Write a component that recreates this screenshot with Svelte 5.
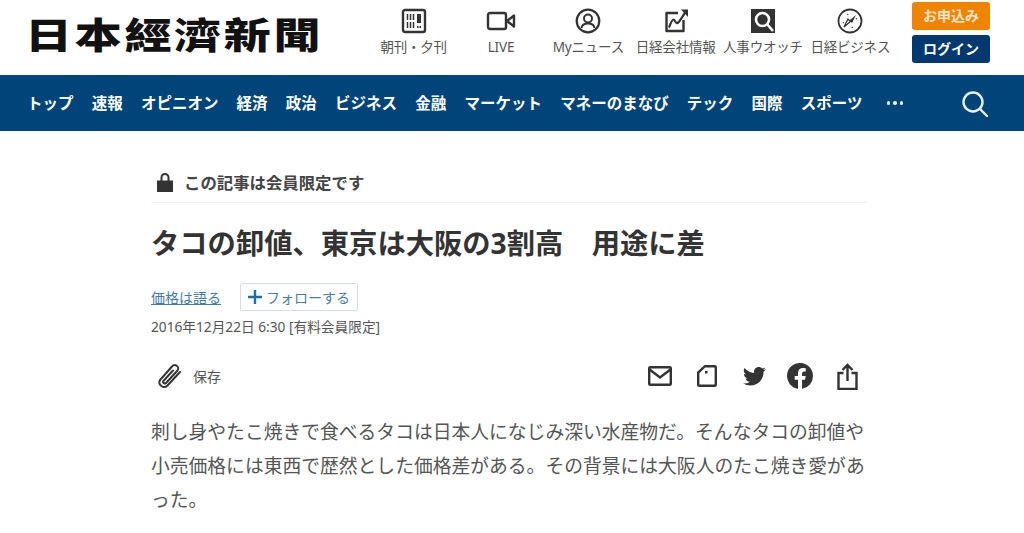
<script>
  const nav = ['トップ','速報','オピニオン','経済','政治','ビジネス','金融','マーケット','マネーのまなび','テック','国際','スポーツ'];
</script>

<div class="page">
  <header class="top">
    <div class="logo"><span>日本經濟新聞</span></div>
    <div class="tools">
      <div class="tool">
        <svg width="26" height="26" viewBox="0 0 26 26"><rect x="2" y="2" width="22" height="22" rx="2" fill="none" stroke="#333" stroke-width="2.4"/><path d="M6.500 6v6M9.500 6v6M12.500 6v6M6.500 14v6M9.500 14v6M12.500 14v6" stroke="#333" stroke-width="1.500"/><path d="M16 6h4v9h-4zM16 18h1.500v2H16zM18.500 18H20v2h-1.500z" fill="#333"/></svg>
        <span>朝刊・夕刊</span>
      </div>
      <div class="tool">
        <svg width="30" height="26" viewBox="0 0 30 26"><rect x="2" y="5" width="18" height="16" rx="2" fill="none" stroke="#333" stroke-width="2.400"/><path d="M21 13l7-5.500v11z" fill="none" stroke="#333" stroke-width="2.400" stroke-linejoin="round"/></svg>
        <span>LIVE</span>
      </div>
      <div class="tool">
        <svg width="26" height="26" viewBox="0 0 26 26"><circle cx="13" cy="13" r="11.300" fill="none" stroke="#333" stroke-width="2.200"/><circle cx="13" cy="10.500" r="4" fill="none" stroke="#333" stroke-width="2"/><path d="M6.500 20c.5-3.500 3-4.500 6.500-4.500s6 1 6.500 4.500" fill="none" stroke="#333" stroke-width="2"/></svg>
        <span>Myニュース</span>
      </div>
      <div class="tool">
        <svg width="26" height="26" viewBox="0 0 26 26"><path d="M15 5H3.500v18h17V12" fill="none" stroke="#333" stroke-width="2.400" stroke-linejoin="round"/><path d="M6 19.500c2-5 3-8 4.500-8s2 4.500 4 3.500S19 9 22.500 4" fill="none" stroke="#333" stroke-width="2.200"/><path d="M18 1.500h7V9z" fill="#333"/></svg>
        <span>日経会社情報</span>
      </div>
      <div class="tool">
        <svg width="26" height="26" viewBox="0 0 26 26"><path d="M1 1h24v24H1z" fill="#333"/><circle cx="12.500" cy="11.500" r="6.500" fill="none" stroke="#fff" stroke-width="2.600"/><path d="M17 16l6 7" stroke="#fff" stroke-width="2.600"/></svg>
        <span>人事ウオッチ</span>
      </div>
      <div class="tool">
        <svg width="26" height="26" viewBox="0 0 26 26"><circle cx="13" cy="13" r="11.500" fill="none" stroke="#333" stroke-width="1.800"/><path d="M19 7l-4 8-2.500-2.500z" fill="#333"/><path d="M7 19l4-8 2.500 2.500z" fill="none" stroke="#333" stroke-width="1.200"/><path d="M6 15l1-.5M19 11l1-.5M10.500 6l.5 1M15 19l.5 1" stroke="#333" stroke-width="1.200"/></svg>
        <span>日経ビジネス</span>
      </div>
    </div>
    <div class="btns">
      <div class="btn orange">お申込み</div>
      <div class="btn blue">ログイン</div>
    </div>
  </header>

  <nav class="nav">
    <ul>
      {#each nav as item}<li>{item}</li>{/each}
      <li class="dots"><i></i><i></i><i></i></li>
    </ul>
    <svg class="search" width="28" height="28" viewBox="0 0 28 28"><circle cx="12" cy="12" r="9.500" fill="none" stroke="#e6f3fa" stroke-width="2.400"/><path d="M19 19l7 7" stroke="#e6f3fa" stroke-width="2.400" stroke-linecap="round"/></svg>
  </nav>

  <main class="article">
    <div class="lockrow">
      <svg width="16" height="19" viewBox="0 0 16 19"><path d="M4.500 8V4.500a3.500 3.500 0 0 1 7 0V8" fill="none" stroke="#333" stroke-width="2"/><rect x="0" y="7.500" width="16" height="11.500" fill="#333"/></svg>
      <span>この記事は会員限定です</span>
    </div>
    <h1>タコの卸値、東京は大阪の3割高　用途に差</h1>
    <div class="topic">
      <a href="#top">価格は語る</a>
      <div class="follow"><svg width="14" height="14" viewBox="0 0 14 14"><path d="M7 0v14M0 7h14" stroke="#1b6eaa" stroke-width="2.400"/></svg>フォローする</div>
    </div>
    <div class="date">2016年12月22日 6:30 [有料会員限定]</div>
    <div class="actions">
      <div class="save">
        <svg width="26" height="26" viewBox="0 0 26 26"><path d="M24 9L11.500 22.500a4.700 4.700 0 0 1-7.500-5.500L16 3.500a3.400 3.400 0 0 1 5.500 4L10 20a1.700 1.700 0 0 1-2.700-2L17 7.500" fill="none" stroke="#333" stroke-width="2" stroke-linecap="round"/></svg>
        <span>保存</span>
      </div>
      <div class="share">
        <svg class="s1" width="24" height="20" viewBox="0 0 24 20"><rect x="1.200" y="1.200" width="21.600" height="17.600" rx="1" fill="none" stroke="#333" stroke-width="2.400"/><path d="M1.500 3.500L12 11.500l10.500-8" fill="none" stroke="#333" stroke-width="2.400"/></svg>
        <svg class="s2" width="20" height="22" viewBox="0 0 20 22"><path d="M8 1.200h9.800a1 1 0 0 1 1 1v17.600a1 1 0 0 1-1 1H2.200a1 1 0 0 1-1-1V7.500z" fill="none" stroke="#333" stroke-width="2.400"/><path d="M8 6h2.500v2.500H8z" fill="#333"/></svg>
        <svg class="s3" width="23" height="19" viewBox="0 0 24 20"><path fill="#333" d="M23.900 2.400a9.800 9.800 0 0 1-2.800.8 4.900 4.900 0 0 0 2.100-2.700 9.800 9.800 0 0 1-3.100 1.200 4.900 4.900 0 0 0-8.400 4.500A13.900 13.900 0 0 1 1.600 1a4.900 4.900 0 0 0 1.500 6.600 4.900 4.900 0 0 1-2.200-.6v.1a4.900 4.900 0 0 0 3.900 4.800 4.900 4.900 0 0 1-2.200.1 4.900 4.900 0 0 0 4.600 3.400A9.900 9.900 0 0 1 0 17.400 13.900 13.900 0 0 0 7.500 19.600c9.100 0 14-7.500 14-14v-.6a10 10 0 0 0 2.400-2.600z"/></svg>
        <svg class="s4" width="26" height="26" viewBox="0 0 26 26"><path fill="#333" d="M26 13a13 13 0 1 0-15 12.840V16.750H7.700V13H11v-2.860c0-3.260 1.940-5.060 4.900-5.060 1.420 0 2.900.25 2.900.25v3.200h-1.630c-1.610 0-2.110 1-2.110 2.030V13h3.590l-.57 3.750h-3.020v9.090A13 13 0 0 0 26 13z"/></svg>
        <svg class="s5" width="21" height="27" viewBox="0 0 21 27"><path d="M6.500 10H1.500v16h18V10h-5" fill="none" stroke="#333" stroke-width="2.400"/><path d="M10.500 18V2M5.500 7l5-5 5 5" fill="none" stroke="#333" stroke-width="2.400"/></svg>
      </div>
    </div>
    <p class="lead">刺し身やたこ焼きで食べるタコは日本人になじみ深い水産物だ。そんなタコの卸値や小売価格には東西で歴然とした価格差がある。その背景には大阪人のたこ焼き愛があった。</p>
  </main>
</div>

<style>
  :global(body) {
    margin: 0;
    background: #fff;
    font-family: "Noto Sans", "Noto Sans CJK JP", sans-serif;
    color: #333;
  }
  .page { width: 1024px; height: 533px; overflow: hidden; }

  .top { height: 75px; display: flex; }
  .logo {
    width: 370px;
    padding: 7px 0 0 25px;
    box-sizing: border-box;
    font-family: "Noto Sans CJK TC", "Noto Sans CJK JP", sans-serif;
    font-weight: 900;
    font-size: 47px;
    line-height: 52px;
    letter-spacing: 2.700px;
    color: #111;
    white-space: nowrap;
  }
  .logo span { display: block; transform: scaleY(0.78); transform-origin: left center; }

  .tools { display: flex; width: 524px; }
  .tool {
    flex: 1 1 0; min-width: 0;
    display: flex; flex-direction: column; align-items: center;
    font-size: 13.500px; color: #555;
    padding-top: 8px;
    box-sizing: border-box;
    white-space: nowrap;
  }
  .tool svg { flex: none; }
  .tool span { margin-top: 3px; line-height: 20px; letter-spacing: -0.2px; }

  .btns { display: flex; flex-direction: column; gap: 5px; padding-top: 2px; margin-left: 18px; }
  .btn {
    width: 78px; height: 28px; border-radius: 3px;
    color: #fff; font-weight: 700; font-size: 14px; line-height: 27px; text-align: center;
  }
  .orange { background: #f08300; color: #fbe3c8; }
  .blue { background: #00396f; }

  .nav {
    height: 56px; background: #00447a;
    display: flex; align-items: center; justify-content: space-between;
    padding: 0 35px 0 27px;
  }
  .nav ul { list-style: none; margin: 0; padding: 0; display: flex; gap: 18.200px; align-items: center; }
  .nav li { color: #fff; font-weight: 700; font-size: 15.500px; line-height: 56px; white-space: nowrap; }
  .dots { display: flex; gap: 3px; margin-left: 6px; }
  .dots i { width: 3.500px; height: 3.500px; background: #e6f3fa; border-radius: 50%; display: block; }
  .search { margin-top: 1px; }

  .article { width: 716px; margin-left: 151px; }
  .lockrow {
    height: 72px; box-sizing: border-box; padding-top: 31px; padding-left: 6px;
    display: flex; align-items: center; gap: 11px;
    border-bottom: 1px solid #f0f0f0;
    font-size: 16.400px; font-weight: 700; color: #444;
  }
  h1 {
    margin: 22px 0 0; font-size: 28.300px; line-height: 36px; font-weight: 700; color: #333;
    white-space: nowrap;
  }
  .topic { display: flex; align-items: center; gap: 19px; margin-top: 22px; }
  .topic a { color: #3f7ba7; font-size: 14px; text-decoration: underline; }
  .follow {
    width: 118px; height: 28px; box-sizing: border-box;
    border: 1px solid #cfe0ea; border-radius: 2px;
    display: flex; align-items: center; justify-content: center; gap: 4px;
    font-size: 14px; color: #4b7fa5;
  }
  .date { font-size: 13.700px; color: #555; margin-top: 6px; line-height: 20px; }
  .actions { display: flex; justify-content: space-between; align-items: center; margin-top: 21px; height: 36px; }
  .save { display: flex; align-items: center; gap: 11px; font-size: 14px; color: #555; margin-left: 5px; }
  .share { display: flex; align-items: center; margin-right: 9px; }
  .s1 { margin-right: 25px; }
  .s2 { margin-right: 26px; }
  .s3 { margin-right: 21px; }
  .s4 { margin-right: 24px; }
  .lead {
    margin: 21px 0 0; font-size: 18.800px; line-height: 34px; color: #555;
  }
</style>
